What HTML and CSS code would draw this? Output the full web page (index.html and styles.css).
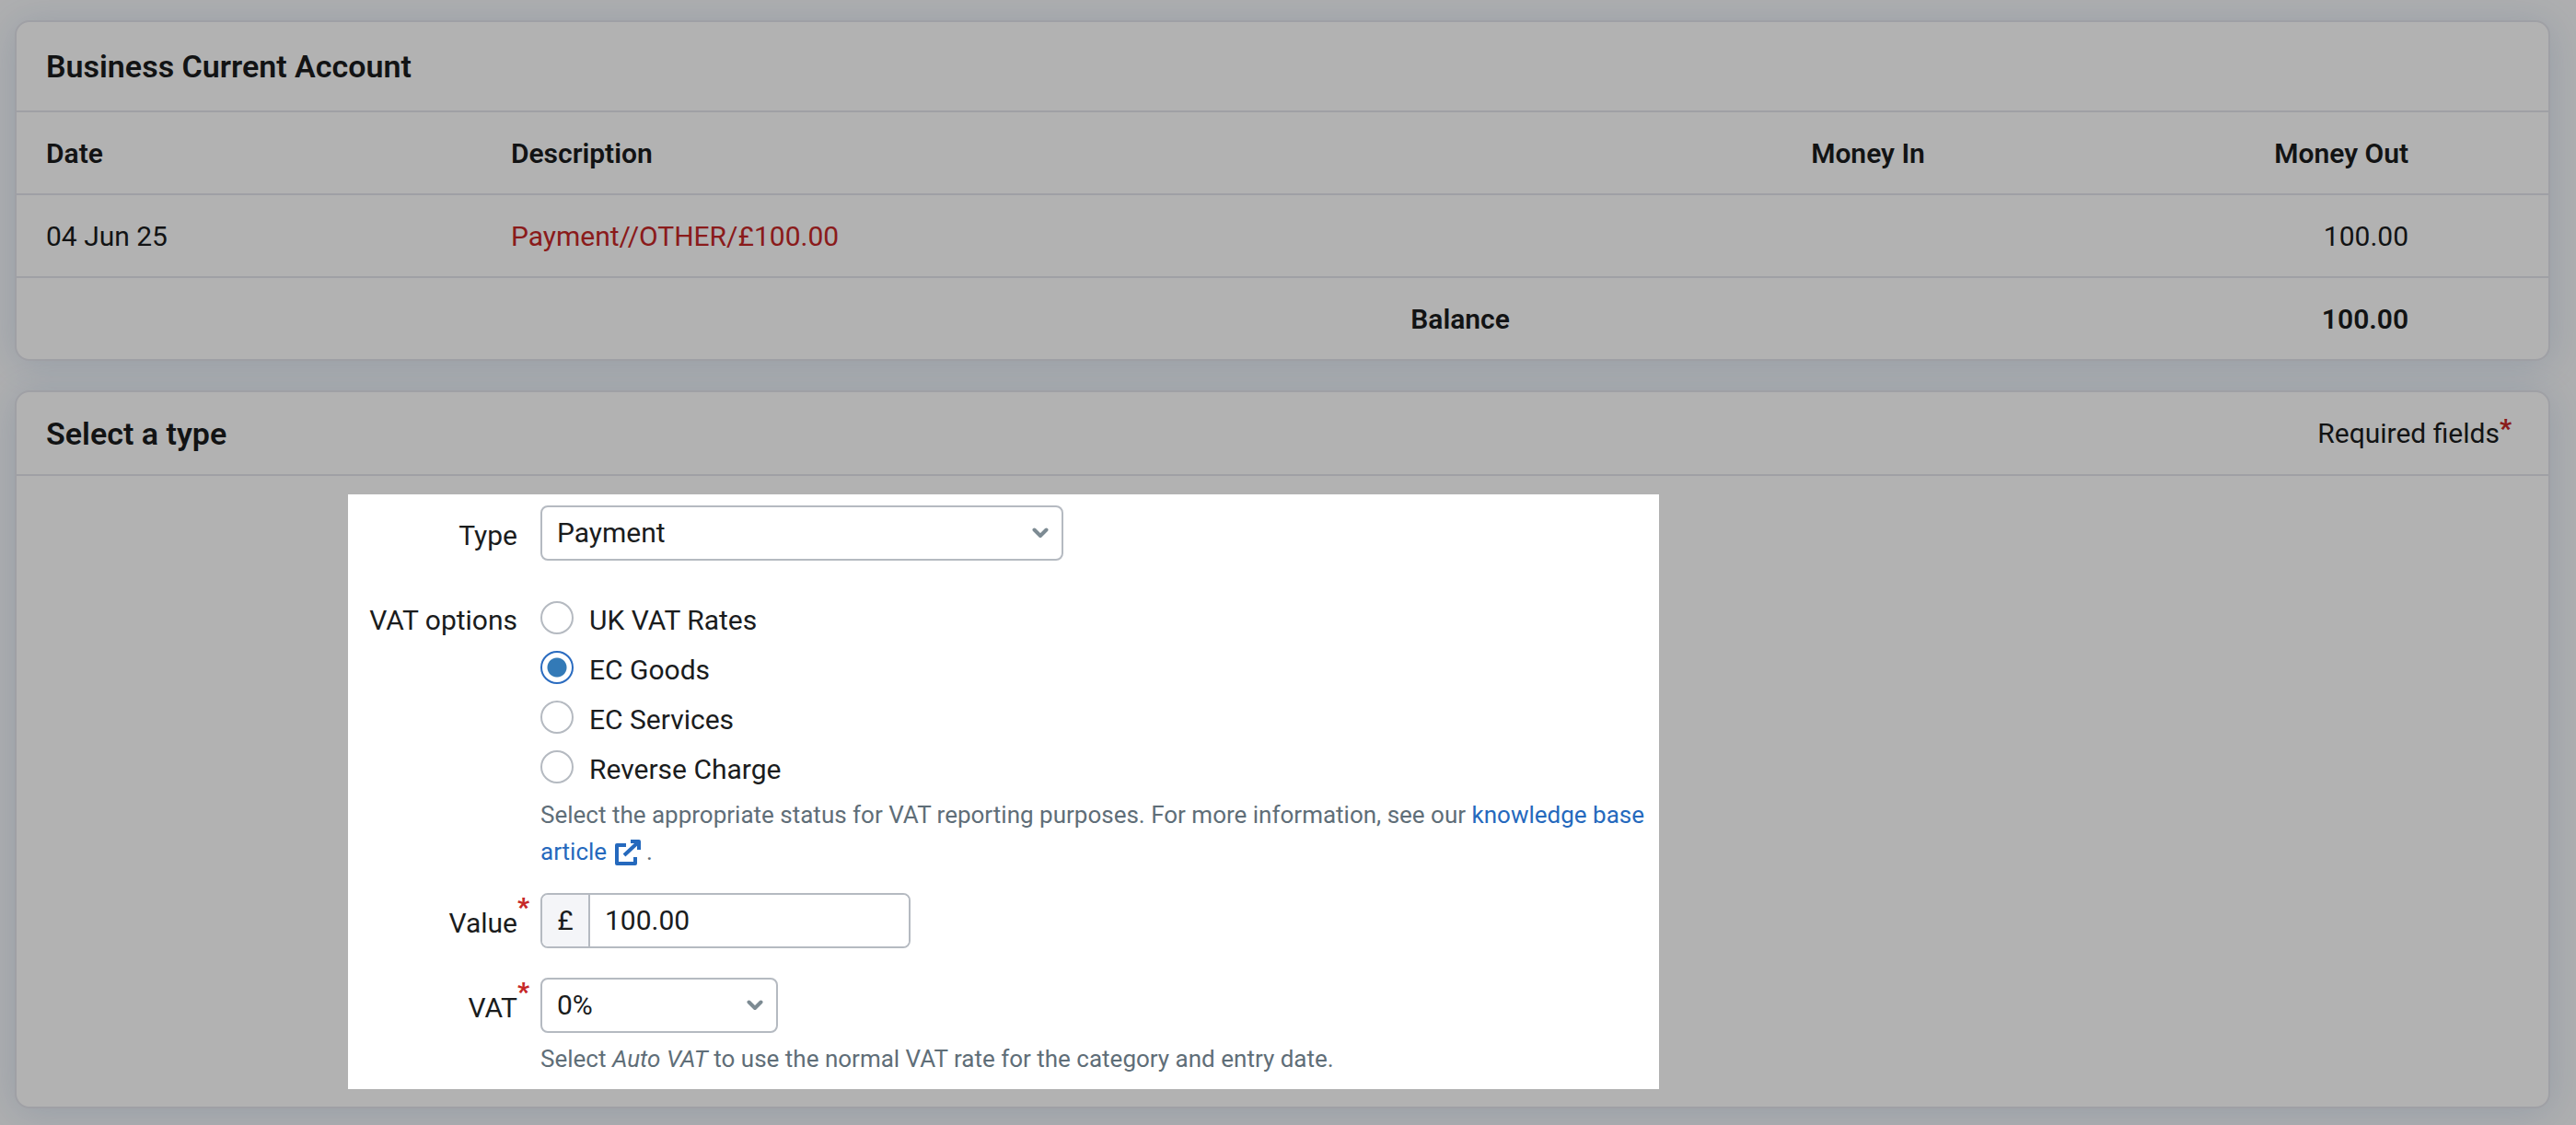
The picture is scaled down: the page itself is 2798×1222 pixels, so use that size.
FILE: index.html
```html
<!DOCTYPE html>
<html lang="en">
<head>
<meta charset="utf-8">
<title>Explain transaction</title>
<link rel="stylesheet" href="styles.css">
</head>
<body>
<main class="page">
  <section class="card">
    <header class="card-header">
      <h2 class="card-title">Business Current Account</h2>
    </header>
    <table class="transactions">
      <colgroup>
        <col class="col-date"><col class="col-description"><col class="col-in"><col class="col-out"><col>
      </colgroup>
      <thead>
        <tr>
          <th scope="col">Date</th>
          <th scope="col">Description</th>
          <th scope="col" class="amount">Money In</th>
          <th scope="col" class="amount">Money Out</th>
          <td></td>
        </tr>
      </thead>
      <tbody>
        <tr>
          <td>04 Jun 25</td>
          <td class="negative">Payment//OTHER/£100.00</td>
          <td></td>
          <td class="amount">100.00</td>
          <td></td>
        </tr>
      </tbody>
      <tfoot>
        <tr>
          <th scope="row" colspan="2" class="amount">Balance</th>
          <td></td>
          <td class="amount total">100.00</td>
          <td></td>
        </tr>
      </tfoot>
    </table>
  </section>

  <section class="card">
    <header class="card-header card-header-compact">
      <h2 class="card-title">Select a type</h2>
      <p class="required-note">Required fields<span class="star">*</span></p>
    </header>
    <div class="card-body">
      <form class="spotlight">
        <div class="field">
          <label class="label" for="type">Type</label>
          <div class="select select-wide">
            <select id="type"><option>Payment</option></select>
            <svg class="chevron" viewBox="0 0 18 12" aria-hidden="true"><path d="M2.500 2.500 9 9 15.500 2.500"/></svg>
          </div>
        </div>

        <div class="field field-radios" role="radiogroup" aria-labelledby="vat-options">
          <span class="label" id="vat-options">VAT options</span>
          <div>
            <label class="radio"><input type="radio" name="vat-option"><span>UK VAT Rates</span></label>
            <label class="radio"><input type="radio" name="vat-option" checked><span>EC Goods</span></label>
            <label class="radio"><input type="radio" name="vat-option"><span>EC Services</span></label>
            <label class="radio"><input type="radio" name="vat-option"><span>Reverse Charge</span></label>
            <p class="help">Select the appropriate status for VAT reporting purposes. For more information, see our <a href="#">knowledge base article <svg class="external" viewBox="0 0 28 28" aria-hidden="true"><path d="M12 6H2V26H22V19M10 17 24 4"/><path d="M17 2H26V11"/></svg></a> .</p>
          </div>
        </div>

        <div class="field">
          <label class="label" for="value">Value<span class="star">*</span></label>
          <div class="money">
            <span class="money-prefix">£</span>
            <input id="value" type="text" value="100.00">
          </div>
        </div>

        <div class="field">
          <label class="label" for="vat">VAT<span class="star">*</span></label>
          <div>
            <div class="select select-narrow">
              <select id="vat"><option>0%</option></select>
              <svg class="chevron" viewBox="0 0 18 12" aria-hidden="true"><path d="M2.500 2.500 9 9 15.500 2.500"/></svg>
            </div>
            <p class="help">Select <em>Auto VAT</em> to use the normal VAT rate for the category and entry date.</p>
          </div>
        </div>
      </form>
    </div>
  </section>
</main>
</body>
</html>
```

FILE: styles.css
```css
* {
  box-sizing: border-box;
}

body {
  margin: 0;
  background: #f9fafc;
  color: #1a1c1d;
  font: 30px/40px Roboto, "Liberation Sans", sans-serif;
}

h2,
p {
  margin: 0;
}

.page {
  display: flex;
  flex-direction: column;
  gap: 32px;
  min-height: 100vh;
  padding: 22px 28px 18px 16px;
  overflow: hidden;
}

.card {
  border: 2px solid #e4e5ec;
  border-radius: 16px;
  background: #fff;
  box-shadow: 0 4px 40px rgba(40, 100, 170, 0.16);
}

.card-header {
  display: flex;
  align-items: center;
  justify-content: space-between;
  min-height: 98px;
  padding: 0 40px 0 32px;
  border-bottom: 2px solid #e4e5ec;
}

.card-header-compact {
  min-height: 91px;
}

.card-title {
  font-size: 34px;
  font-weight: 600;
}

/* Transactions table */

.transactions {
  width: 100%;
  table-layout: fixed;
  border-collapse: separate;
  border-spacing: 0;
}

.col-date { width: 18.36%; }
.col-description { width: 41.78%; }
.col-in { width: 16.4%; }
.col-out { width: 19.1%; }

.transactions th,
.transactions td {
  height: 90px;
  padding: 2px 32px 0;
  border-bottom: 2px solid #e4e5ec;
  text-align: left;
}

.transactions tfoot th,
.transactions tfoot td {
  height: 88px;
  border-bottom: 0;
}

.transactions th,
.transactions .total {
  font-weight: 600;
}

.transactions .amount {
  text-align: right;
}

.transactions .negative {
  color: #c62828;
}

/* Form, lit up while the rest of the page is dimmed */

.card-body {
  display: grid;
  grid-template-columns: 360px minmax(0, 1424px) 1fr;
  padding: 20px 0 19px;
}

.spotlight {
  position: relative;
  grid-column: 2;
  padding: 12px 12px 13px 0;
  background: #fff;
  box-shadow: 0 0 0 4000px rgba(0, 0, 0, 0.3);
}

.field {
  display: grid;
  grid-template-columns: 184px 1fr;
  column-gap: 25px;
  margin-bottom: 32px;
}

.field:last-child {
  margin-bottom: 0;
}

.field-radios {
  margin: 35px 0 25px;
}

.label {
  position: relative;
  justify-self: end;
  height: 60px;
  padding-top: 3px;
  line-height: 60px;
}

.field-radios .label {
  line-height: 54px;
}

.star {
  color: #c62828;
  font-size: 28px;
  font-weight: 900;
}

.label .star {
  position: absolute;
  top: -14px;
  left: 100%;
}

.required-note .star {
  line-height: 0;
  vertical-align: 6px;
}

.select {
  display: grid;
  align-items: center;
}

.select-wide { max-width: 568px; }
.select-narrow { max-width: 258px; }

.select select {
  grid-area: 1 / 1;
  width: 100%;
  height: 60px;
  padding: 0 48px 0 16px;
  border: 2px solid #b5bac1;
  border-radius: 8px;
  background: #fff;
  color: inherit;
  font: inherit;
  appearance: none;
}

.chevron {
  grid-area: 1 / 1;
  justify-self: end;
  width: 18px;
  height: 12px;
  margin-right: 16px;
  fill: none;
  stroke: #7d8b93;
  stroke-width: 4;
  stroke-linecap: round;
  stroke-linejoin: round;
  pointer-events: none;
}

.radio {
  display: flex;
  align-items: center;
  gap: 17px;
  height: 54px;
}

.radio span {
  padding-top: 5px;
}

.radio input {
  width: 36px;
  height: 36px;
  margin: 0;
  border: 2px solid #b5bac1;
  border-radius: 50%;
  background: #fff;
  appearance: none;
}

.radio input:checked {
  border-color: #2b6cc0;
  background: radial-gradient(circle, #337ab7 10px, #fff 11px);
}

.help {
  margin-top: 5px;
  color: #5f6e78;
  font-size: 26px;
}

.select + .help {
  margin-top: 8px;
}

.help a {
  color: #2569bd;
  text-decoration: none;
}

.external {
  width: 28px;
  height: 28px;
  margin-left: 2px;
  vertical-align: -6px;
  fill: none;
  stroke: currentColor;
  stroke-width: 4;
  stroke-linejoin: round;
}

.money {
  display: flex;
  max-width: 402px;
  height: 60px;
  border: 2px solid #b5bac1;
  border-radius: 8px;
  overflow: hidden;
}

.money-prefix {
  width: 52px;
  border-right: 2px solid #b5bac1;
  background: #f4f5f8;
  line-height: 56px;
  text-align: center;
}

.money input {
  flex: 1;
  min-width: 0;
  padding: 0 16px;
  border: 0;
  background: #fff;
  color: inherit;
  font: inherit;
}
```
